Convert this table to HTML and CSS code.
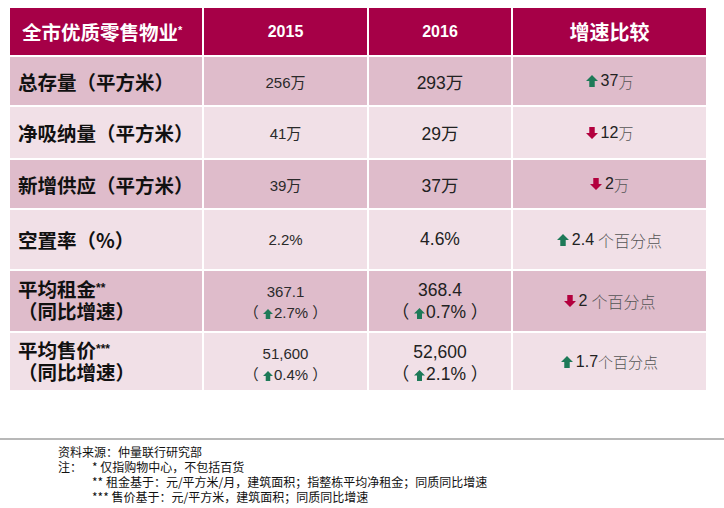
FILE: index.html
```html
<!DOCTYPE html>
<html lang="zh">
<head>
<meta charset="utf-8">
<link rel="stylesheet" href="styles.css">
</head>
<body>
<div class="table">
  <div class="cell head label-head"><span>全市优质零售物业<span class="sup">*</span></span></div>
  <div class="cell head year">2015</div>
  <div class="cell head year">2016</div>
  <div class="cell head cmp-head">增速比较</div>

  <div class="cell dark label">总存量（平方米）</div>
  <div class="cell dark v15">256万</div>
  <div class="cell dark v16">293万</div>
  <div class="cell dark cmp"><svg class="arr" viewBox="0 0 11 11"><polygon class="up" points="5.5,0 11,5.5 8,5.5 8,11 3,11 3,5.5 0,5.5"/></svg><span class="num">37</span><span class="unit">万</span></div>

  <div class="cell light label">净吸纳量（平方米）</div>
  <div class="cell light v15">41万</div>
  <div class="cell light v16">29万</div>
  <div class="cell light cmp"><svg class="arr" viewBox="0 0 11 11"><polygon class="down" points="3,0 8,0 8,5.5 11,5.5 5.5,11 0,5.5 3,5.5"/></svg><span class="num">12</span><span class="unit">万</span></div>

  <div class="cell dark label">新增供应（平方米）</div>
  <div class="cell dark v15">39万</div>
  <div class="cell dark v16">37万</div>
  <div class="cell dark cmp"><svg class="arr" viewBox="0 0 11 11"><polygon class="down" points="3,0 8,0 8,5.5 11,5.5 5.5,11 0,5.5 3,5.5"/></svg><span class="num">2</span><span class="unit">万</span></div>

  <div class="cell light label">空置率（%）</div>
  <div class="cell light v15">2.2%</div>
  <div class="cell light v16">4.6%</div>
  <div class="cell light cmp"><svg class="arr" viewBox="0 0 11 11"><polygon class="up" points="5.5,0 11,5.5 8,5.5 8,11 3,11 3,5.5 0,5.5"/></svg><span class="num">2.4</span><span class="unit sp">个百分点</span></div>

  <div class="cell dark label two"><div>平均租金<span class="sup">**</span></div><div>（同比增速）</div></div>
  <div class="cell dark v15 two">367.1<br>（ <svg class="arr sm" viewBox="0 0 11 11"><polygon class="up" points="5.5,0 11,5.5 8,5.5 8,11 3,11 3,5.5 0,5.5"/></svg>2.7% ）</div>
  <div class="cell dark v16 two">368.4<br>（ <svg class="arr" viewBox="0 0 11 11"><polygon class="up" points="5.5,0 11,5.5 8,5.5 8,11 3,11 3,5.5 0,5.5"/></svg>0.7% ）</div>
  <div class="cell dark cmp"><svg class="arr" viewBox="0 0 11 11"><polygon class="down" points="3,0 8,0 8,5.5 11,5.5 5.5,11 0,5.5 3,5.5"/></svg><span class="num">2</span><span class="unit sp">个百分点</span></div>

  <div class="cell light label two"><div>平均售价<span class="sup">***</span></div><div>（同比增速）</div></div>
  <div class="cell light v15 two">51,600<br>（ <svg class="arr sm" viewBox="0 0 11 11"><polygon class="up" points="5.5,0 11,5.5 8,5.5 8,11 3,11 3,5.5 0,5.5"/></svg>0.4% ）</div>
  <div class="cell light v16 two">52,600<br>（ <svg class="arr" viewBox="0 0 11 11"><polygon class="up" points="5.5,0 11,5.5 8,5.5 8,11 3,11 3,5.5 0,5.5"/></svg>2.1% ）</div>
  <div class="cell light cmp"><svg class="arr" viewBox="0 0 11 11"><polygon class="up" points="5.5,0 11,5.5 8,5.5 8,11 3,11 3,5.5 0,5.5"/></svg><span class="num">1.7</span><span class="unit">个百分点</span></div>
</div>

<div class="rule"></div>

<div class="notes">
  <div class="note-line">资料来源：仲量联行研究部</div>
  <div class="note-grid">
    <div class="note-line">注：</div>
    <div>
      <div class="note-line">* 仅指购物中心，不包括百货</div>
      <div class="note-line">** 租金基于：元/平方米/月，建筑面积；指整栋平均净租金；同质同比增速</div>
      <div class="note-line">*** 售价基于：元/平方米，建筑面积；同质同比增速</div>
    </div>
  </div>
</div>
</body>
</html>
```

FILE: styles.css
```css
html, body {
  margin: 0;
  padding: 0;
  background: #ffffff;
}

body {
  width: 724px;
  height: 508px;
  overflow: hidden;
  font-family: "Liberation Sans", Arial, "Noto Sans CJK SC", sans-serif;
  color: #222;
}

.table {
  margin: 8px 0 0 10px;
  width: 696px;
  display: grid;
  grid-template-columns: 192px 163px 142px 193px;
  grid-template-rows: 47px 48px 51px 48px 59px 60px 57px;
  gap: 2px;
  background: #ffffff;
}

.cell {
  display: flex;
  align-items: center;
  justify-content: center;
  text-align: center;
}

.head {
  background: #a60047;
  color: #ffffff;
  font-weight: bold;
}

.label-head {
  justify-content: flex-start;
  padding-left: 12px;
  font-size: 19.5px;
  font-family: "Noto Sans CJK SC", sans-serif;
}

.head .sup {
  font-size: 11px;
  vertical-align: 6px;
  font-family: "Liberation Sans", sans-serif;
}

.year {
  font-size: 16px;
}

.cmp-head {
  font-size: 20px;
  font-family: "Noto Sans CJK SC", sans-serif;
}

.dark {
  background: #dfbccb;
}

.light {
  background: #f1e0e7;
}

.label {
  justify-content: flex-start;
  text-align: left;
  padding-left: 8px;
  font-weight: bold;
  font-size: 19.5px;
  color: #111;
  font-family: "Noto Sans CJK SC", sans-serif;
}

.label.two {
  flex-direction: column;
  align-items: flex-start;
  justify-content: center;
  line-height: 22px;
  padding-bottom: 2px;
}

.label .sup {
  font-size: 12px;
  line-height: 10px;
  vertical-align: 5px;
  font-family: "Liberation Sans", sans-serif;
}

.v15 {
  font-size: 15px;
  color: #2a2a2a;
}

.v16 {
  font-size: 17.5px;
  color: #222;
}

.v15.two, .v16.two {
  display: block;
  padding-top: 10px;
  line-height: 21px;
}

.v16.two {
  padding-top: 8px;
  line-height: 22px;
}

.cmp {
  font-size: 16px;
  color: #222;
}

.arr {
  width: 12px;
  height: 12px;
  margin-right: 3px;
  flex: none;
}

.v15 .arr, .v16 .arr {
  display: inline-block;
  width: 11px;
  height: 11px;
  vertical-align: -1px;
  margin-right: 1px;
}

.v15 .arr.sm {
  width: 10px;
  height: 10px;
}

.up {
  fill: #1e7a58;
}

.down {
  fill: #b3003e;
}

.unit {
  color: #555;
  font-family: "Noto Sans CJK SC", sans-serif;
  font-weight: 300;
  font-size: 15px;
}

.unit.sp {
  margin-left: 4px;
  font-size: 16px;
}

.rule {
  margin-top: 48px;
  height: 2px;
  background: #b8b8b8;
}

.notes {
  padding-left: 58px;
  padding-top: 4px;
  font-family: "Noto Sans CJK SC", sans-serif;
  font-size: 12px;
  line-height: 15px;
  color: #111;
}

.note-line {
  height: 15px;
  white-space: nowrap;
}

.note-grid {
  display: grid;
  grid-template-columns: 34px auto;
}
```
